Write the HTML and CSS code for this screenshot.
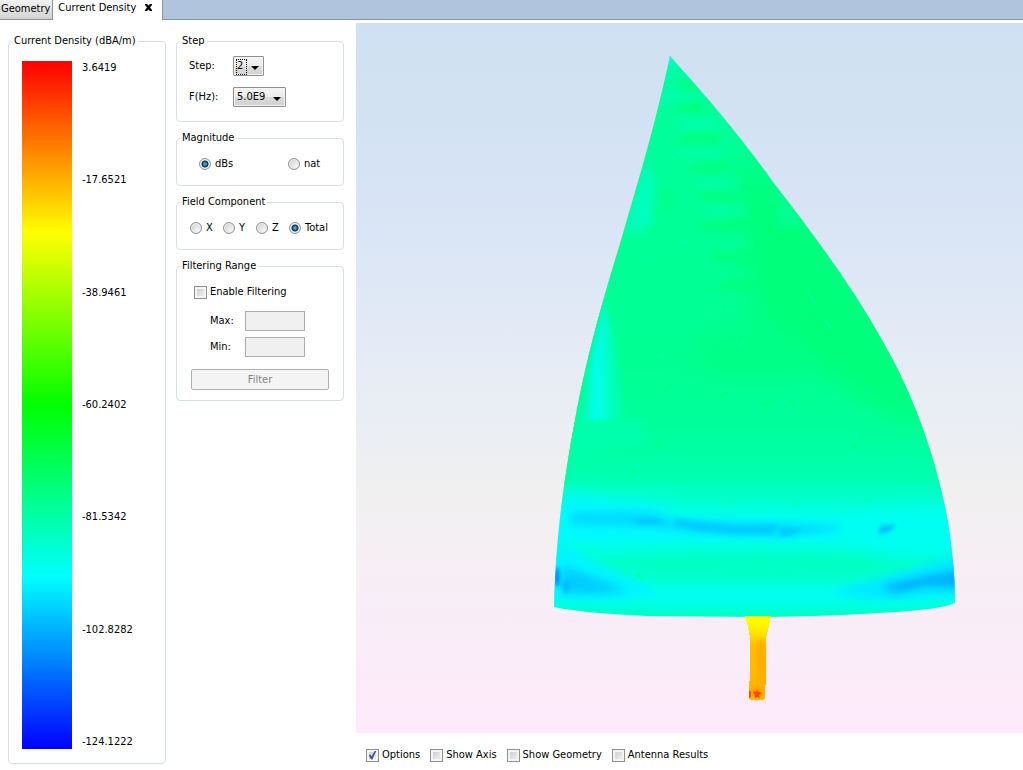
FILE: index.html
```html
<!DOCTYPE html>
<html lang="en">

<head>
  <meta charset="UTF-8">
  <meta name="viewport" content="width=device-width, initial-scale=1.0">
  <title>Current Density</title>
  <link rel="stylesheet" href="styles.css">
</head>

<body>
  <nav class="tabs">
    <div class="tab">
      <button type="button" class="tab-name">Geometry</button>
    </div>
    <div class="tab active">
      <button type="button" class="tab-name">Current Density</button>
      <button type="button" class="tab-close" aria-label="Close">
        <svg width="7" height="7" viewBox="0 0 7 7"><path d="M0 0h2l1.500 1.500L5 0h2v1L5 3.500 7 6v1H5L3.500 5.500 2 7H0V6l2-2.500L0 1z" /></svg>
      </button>
    </div>
  </nav>

  <main class="content">
    <fieldset class="group scale">
      <legend>Current Density (dBA/m)</legend>
      <div class="scale-bar"></div>
      <div class="scale-values">
        <span>3.6419</span>
        <span>-17.6521</span>
        <span>-38.9461</span>
        <span>-60.2402</span>
        <span>-81.5342</span>
        <span>-102.8282</span>
        <span>-124.1222</span>
      </div>
    </fieldset>

    <form class="options">
      <fieldset class="group step">
        <legend>Step</legend>
        <label for="step">Step:</label>
        <div class="combo focused">
          <select id="step">
            <option>2</option>
          </select>
        </div>
        <label for="freq">F(Hz):</label>
        <div class="combo">
          <select id="freq">
            <option>5.0E9</option>
          </select>
        </div>
      </fieldset>

      <fieldset class="group magnitude">
        <legend>Magnitude</legend>
        <label class="choice"><input type="radio" name="magnitude" checked>dBs</label>
        <label class="choice"><input type="radio" name="magnitude">nat</label>
      </fieldset>

      <fieldset class="group component">
        <legend>Field Component</legend>
        <label class="choice"><input type="radio" name="component">X</label>
        <label class="choice"><input type="radio" name="component">Y</label>
        <label class="choice"><input type="radio" name="component">Z</label>
        <label class="choice"><input type="radio" name="component" checked>Total</label>
      </fieldset>

      <fieldset class="group filtering">
        <legend>Filtering Range</legend>
        <label class="choice"><input type="checkbox">Enable Filtering</label>
        <div class="range">
          <label for="max">Max:</label>
          <input type="text" id="max" disabled>
          <label for="min">Min:</label>
          <input type="text" id="min" disabled>
        </div>
        <button type="button" class="filter-button" disabled>Filter</button>
      </fieldset>
    </form>

    <section class="viewer">
      <div class="canvas">
        <svg class="model" viewBox="356 23 667 710" preserveAspectRatio="xMidYMid meet">
          <defs>
            <linearGradient id="base" gradientUnits="userSpaceOnUse" x1="740" y1="56" x2="740" y2="617">
              <stop offset="0" stop-color="#00ffb0" />
              <stop offset="0.080" stop-color="#00ff9c" />
              <stop offset="0.550" stop-color="#00ff92" />
              <stop offset="0.680" stop-color="#00ff9e" />
              <stop offset="0.750" stop-color="#00ffb0" />
              <stop offset="0.800" stop-color="#00ffd4" />
              <stop offset="0.827" stop-color="#00fff4" />
              <stop offset="0.850" stop-color="#00fcff" />
              <stop offset="0.880" stop-color="#00ffe0" />
              <stop offset="0.905" stop-color="#00ffca" />
              <stop offset="0.930" stop-color="#00ffd2" />
              <stop offset="0.960" stop-color="#00fff4" />
              <stop offset="0.980" stop-color="#00ffe0" />
              <stop offset="1" stop-color="#00ffc0" />
            </linearGradient>
            <linearGradient id="streak" gradientUnits="userSpaceOnUse" x1="586" y1="380" x2="630" y2="380">
              <stop offset="0" stop-color="#00ffdc" stop-opacity="0.400" />
              <stop offset="0.200" stop-color="#00fff0" />
              <stop offset="0.400" stop-color="#00ffe0" stop-opacity="0.900" />
              <stop offset="1" stop-color="#00ffb0" stop-opacity="0" />
            </linearGradient>
            <linearGradient id="neck" gradientUnits="userSpaceOnUse" x1="758" y1="616" x2="758" y2="700">
              <stop offset="0" stop-color="#ffff00" />
              <stop offset="0.120" stop-color="#fff600" />
              <stop offset="0.350" stop-color="#ffc000" />
              <stop offset="0.600" stop-color="#ffbc00" />
              <stop offset="0.900" stop-color="#ffb000" />
              <stop offset="1" stop-color="#ffc400" />
            </linearGradient>
            <clipPath id="hull">
              <path d="M670 56C655 125 640 175 622 237C600 308 585 365 575 420C562 490 556 540 554 607Q580 613 648 616L757 617Q835 616 878 613Q940 610 955 603C955 560 948 515 940 485C928 435 908 385 882 340C853 288 815 236 773 182C748 147 724 116 670 56Z" />
            </clipPath>
            <filter id="soft2" x="-50%" y="-100%" width="200%" height="300%"><feGaussianBlur stdDeviation="2" /></filter>
            <filter id="soft4" x="-50%" y="-100%" width="200%" height="300%"><feGaussianBlur stdDeviation="4" /></filter>
            <filter id="soft8" x="-50%" y="-100%" width="200%" height="300%"><feGaussianBlur stdDeviation="8" /></filter>
            <filter id="soft14" x="-50%" y="-50%" width="200%" height="200%"><feGaussianBlur stdDeviation="14" /></filter>
          </defs>

          <g clip-path="url(#hull)">
            <rect x="550" y="50" width="410" height="570" fill="url(#base)" />

            <!-- strong green on the right flank -->
            <path d="M735 150L800 200L880 320L935 430L880 410L820 370L760 330L745 260Z" fill="#00ff7a" filter="url(#soft14)" />
            <ellipse cx="750" cy="355" rx="55" ry="22" fill="#00ff84" filter="url(#soft14)" />

            <!-- ripples under the tip -->
            <g fill="#00ff7e" filter="url(#soft4)">
              <ellipse cx="686" cy="86" rx="13" ry="5" />
              <ellipse cx="692" cy="108" rx="19" ry="5" />
              <ellipse cx="700" cy="138" rx="23" ry="6" />
              <ellipse cx="710" cy="167" rx="22" ry="6" />
              <ellipse cx="718" cy="196" rx="22" ry="6" />
              <ellipse cx="724" cy="226" rx="26" ry="6" />
              <ellipse cx="733" cy="256" rx="24" ry="5" />
              <ellipse cx="740" cy="286" rx="24" ry="5" />
              <ellipse cx="666" cy="200" rx="9" ry="12" opacity="0.500" />
            </g>
            <g fill="#00ffb2" filter="url(#soft4)">
              <ellipse cx="675" cy="96" rx="18" ry="4" />
              <ellipse cx="700" cy="124" rx="26" ry="4" />
              <ellipse cx="700" cy="153" rx="24" ry="4" opacity="0.800" />
              <ellipse cx="716" cy="182" rx="24" ry="4" opacity="0.700" />
              <ellipse cx="724" cy="211" rx="22" ry="4" opacity="0.700" />
              <ellipse cx="730" cy="242" rx="22" ry="3" opacity="0.500" />
            </g>
            <path d="M777 187L802 222L778 226Z" fill="#00ff94" filter="url(#soft4)" />
            <path d="M664 54L674 54L674 59L666 64Z" fill="#00ffee" filter="url(#soft2)" />

            <!-- cyan streaks along the left edge -->
            <path d="M645 165L655 180L650 228L625 233L632 208Z" fill="#00ffbe" filter="url(#soft4)" />
            <path d="M600 290L612 330L630 421L580 423L586 370Z" fill="url(#streak)" filter="url(#soft2)" />
            <path d="M566 424L640 421L650 440L566 460Z" fill="#00ffac" filter="url(#soft4)" />
            <path d="M608 281L601 307L593 338L587 362L580 393L575 420L570 450L564 487" fill="none" stroke="#00ffa0" stroke-width="7" filter="url(#soft2)" />

            <!-- upper dark band -->
            <path d="M562 492L620 500L680 507L640 533L556 530Z" fill="#00f8ff" filter="url(#soft8)" />
            <path d="M860 515L945 505L966 520L966 555L880 550L820 535Z" fill="#00fff0" filter="url(#soft8)" />
            <path d="M571 512L650 512L675 520L780 522L840 526L840 530L778 537L700 533L632 526L571 525Z" fill="#00dcff" filter="url(#soft4)" />
            <g fill="#00c8ff" filter="url(#soft2)">
              <path d="M630 519L657 518L664 523L640 525Z" />
              <path d="M675 518L700 522L740 526L778 524L772 534L740 534L700 531L675 526Z" opacity="0.800" />
              <path d="M781 528L803 529L796 533L781 537Z" />
            </g>
            <path d="M879 526L897 524L890 531L879 535Z" fill="#00c0ff" filter="url(#soft2)" />

            <!-- lower band, darkest at both edges -->
            <ellipse cx="757" cy="564" rx="130" ry="12" fill="#00ffc2" filter="url(#soft8)" />
            <path d="M556 540L600 565L660 592L620 599L554 598Z" fill="#00f4ff" filter="url(#soft4)" />
            <path d="M966 552L900 573L830 592L880 600L966 594Z" fill="#00eaff" filter="url(#soft4)" />
            <path d="M563 566L590 576L628 591L595 594L564 593Z" fill="#00ccff" filter="url(#soft4)" />
            <path d="M966 568L930 575L880 586L894 593L925 586L966 588Z" fill="#00b4ff" filter="url(#soft4)" />
            <path d="M966 574L930 578L900 585L900 590L928 583L966 582Z" fill="#00b4ff" opacity="0.700" filter="url(#soft2)" />
            <ellipse cx="557" cy="577" rx="3" ry="10" fill="#0084ff" filter="url(#soft2)" />
            <ellipse cx="566" cy="586" rx="3" ry="7" fill="#00b4ff" filter="url(#soft2)" />

            <!-- mesh speckles -->
            <path stroke="#00ff6c" stroke-width="2" opacity="0.600" d="M692 105l9-1M742 186l10 3M738 222l17 2M715 257l14-1M783 232l9 3M667 388l6-4M720 398l8-6M764 405l9-5M790 400l5 4M832 350l6 3M708 288l4 4M734 310l6 2M771 315l5-1M852 449l5-4M631 470l6 2M655 446l4-2" />
            <path stroke="#00ffb4" stroke-width="2" opacity="0.600" d="M716 154l4 8M673 160l2-6M682 240l6 3M659 355l5 2M698 371l3 3M810 296l6 8M825 320l5 8M755 438l-4 8M694 464l-6 5M596 430l8 3M727 505l6-8M794 507l5-8M861 505l9-7M907 465l5-6M740 348l4-8M765 470l4 5M830 460l6 8M650 260l3-5" />
            <path d="M636 574l5 3" stroke="#00ffa0" stroke-width="3" />
          </g>

          <!-- feed -->
          <path d="M745 616H771L769 626L766 638V671L765 699L763 700H751L749 699V681H750V637L748 627Z" fill="url(#neck)" shape-rendering="crispEdges" />
          <path d="M759 640H765V660L762 690L757 660Z" fill="#ff9c00" opacity="0.600" filter="url(#soft2)" />
          <path d="M749 690l2 2v5l-2 1z" fill="#ff5000" />
          <path d="M754 691l2 1 1-2 2 2 3 1-3 2 1 3-3-1-2 1v-3l-2-2z" fill="#ff3c00" />
          <path d="M753 690h8v8h-8z" fill="#ff6000" opacity="0.500" filter="url(#soft2)" />
        </svg>
      </div>
      <div class="display-options">
        <label class="choice"><input type="checkbox" checked>Options</label>
        <label class="choice"><input type="checkbox">Show Axis</label>
        <label class="choice"><input type="checkbox">Show Geometry</label>
        <label class="choice"><input type="checkbox">Antenna Results</label>
      </div>
    </section>
  </main>
</body>

</html>
```
FILE: styles.css
```css
* {
  box-sizing: border-box;
}

body {
  margin: 0;
  height: 100vh;
  display: flex;
  flex-direction: column;
  background-color: #fff;
  color: #000;
  font-family: Tahoma, "DejaVu Sans Condensed", "Noto Sans", sans-serif;
  font-size: 11px;
  line-height: 14px;
}

button,
input,
select {
  font: inherit;
  color: inherit;
  margin: 0;
}

/* tabs */
.tabs {
  display: flex;
  height: 20px;
  background-color: #b0c4de;
  border-bottom: 1px solid #8c919c;
}

.tab {
  display: flex;
  align-items: center;
  gap: 9px;
  height: 19px;
  padding: 0 2px 2px 1px;
  background: linear-gradient(#f2f2f2, #d2d2d2);
  border-right: 1px solid #8c919c;
}

.tab.active {
  height: 20px;
  padding: 0 10px 5px 5px;
  background: #fff;
}

.tab-name,
.tab-close {
  padding: 0;
  border: none;
  background: none;
  white-space: nowrap;
}

.tab-close {
  display: flex;
}

/* columns */
.content {
  flex: 1;
  min-height: 0;
  display: grid;
  grid-template-columns: 158px 168px 1fr;
  column-gap: 10px;
  padding-left: 8px;
}

.group {
  --indent: 12px;
  min-width: 0;
  margin: 0;
  border: 1px solid #d5dfe5;
  border-radius: 4px;
}

/* the caption starts near the border whatever the group's padding is */
.group legend {
  padding: 0 2px;
  margin-left: calc(3px - var(--indent));
}

/* colour scale */
.group.scale {
  --indent: 13px;
  display: flex;
  gap: 10px;
  margin: 14px 0 6px;
  padding: 13px 13px 14px var(--indent);
}

.scale-bar {
  width: 50px;
  background: linear-gradient(#f00, #ff0, #0f0, #0ff, #00f);
}

.scale-values {
  display: flex;
  flex-direction: column;
  justify-content: space-between;
}

/* options */
.options {
  display: flex;
  flex-direction: column;
  gap: 9px;
  padding-top: 14px;
}

.group.step {
  display: grid;
  grid-template-columns: 44px auto;
  justify-content: start;
  align-items: center;
  row-gap: 11px;
  padding: 8px 12px 14px var(--indent);
}

.combo {
  position: relative;
  justify-self: start;
}

.combo select {
  display: block;
  appearance: none;
  height: 20px;
  padding: 0 19px 0 3px;
  border: 1px solid #8e8f8f;
  border-radius: 1px;
  background: linear-gradient(#f4f4f4, #ebebeb 50%, #dcdcdc 50%, #d0d0d0);
  box-shadow: inset 0 0 0 1px #f4f4f4;
}

.combo::after {
  content: "";
  position: absolute;
  right: 5px;
  top: 10px;
  border: 4px solid transparent;
  border-top-color: #000;
  border-bottom: none;
  pointer-events: none;
}

.combo.focused::before {
  content: "";
  position: absolute;
  left: 3px;
  top: 3px;
  width: 9px;
  height: 14px;
  border: 1px dotted #000;
  pointer-events: none;
}

.group.magnitude {
  --indent: 22px;
  display: grid;
  grid-template-columns: 89px auto;
  justify-content: start;
  padding: 12px 12px 14px var(--indent);
}

.group.component {
  --indent: 13px;
  display: grid;
  grid-template-columns: 33px 33px 33px auto;
  justify-content: start;
  padding: 12px 12px 14px var(--indent);
}

.choice {
  display: flex;
  align-items: center;
  gap: 4px;
  white-space: nowrap;
}

.choice input {
  appearance: none;
  flex: none;
  width: 12px;
  height: 12px;
  border: 1px solid #8e8f8f;
}

.choice input[type="radio"] {
  border-radius: 50%;
  background: radial-gradient(circle at 70% 70%, #f4f4f4, #c8ccd0);
  box-shadow: inset 0 0 0 1px #f4f4f4;
}

.choice input[type="radio"]:checked {
  background: radial-gradient(circle, #5ec4ec 0, #1f6c9c 2px, #0b2b46 3px, #e4e6e8 4px);
}

.choice input[type="checkbox"] {
  width: 13px;
  height: 13px;
  background: linear-gradient(135deg, #c4c9d0, #f6f6f6);
  box-shadow: inset 0 0 0 2px #f4f4f4;
}

.choice input[type="checkbox"]:checked {
  display: grid;
  place-items: center;
}

.choice input[type="checkbox"]:checked::before {
  content: "";
  width: 8px;
  height: 9px;
  background-color: #3b5396;
  clip-path: polygon(0 50%, 22% 45%, 38% 68%, 80% 0, 100% 0, 48% 100%, 32% 100%);
}

/* filtering */
.group.filtering {
  --indent: 14px;
  display: flex;
  flex-direction: column;
  gap: 12px;
  padding: 12px 14px 10px var(--indent);
}

.filtering .choice {
  gap: 3px;
  padding-left: 3px;
}

.range {
  display: grid;
  grid-template-columns: 35px 60px;
  align-items: center;
  row-gap: 6px;
  padding-left: 19px;
}

.range input {
  width: 100%;
  height: 20px;
  border: 1px solid #abadb3;
  background-color: #f0f0f0;
}

.filter-button {
  height: 21px;
  padding: 0;
  border: 1px solid #adb2b5;
  border-radius: 2px;
  background-color: #f4f4f4;
  color: #838383;
}

/* 3D view */
.viewer {
  display: flex;
  flex-direction: column;
  min-width: 0;
  padding-left: 2px;
  padding-top: 3px;
}

.canvas {
  flex: 1;
  min-height: 0;
  background: linear-gradient(#cee0f2, #dae5f5 30%, #e4ebf6 45%, #f0f0f0 66%, #f5eff4 75%, #fdeafa 97%);
}

.model {
  display: block;
  width: 100%;
  height: 100%;
}

.display-options {
  display: flex;
  align-items: center;
  gap: 10px;
  height: 37px;
  padding: 7px 10px 0;
}

.display-options .choice {
  gap: 3px;
}
```
